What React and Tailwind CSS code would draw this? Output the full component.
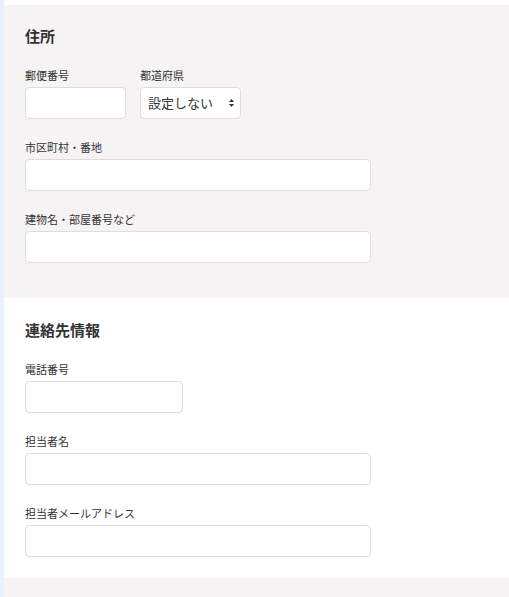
const Field = ({ label, width }) => (
  <div className="mt-[19px]">
    <label className="block text-[11px] leading-[18px] text-[#333] mb-[3px]">{label}</label>
    <input
      type="text"
      className={`${width} h-[32px] bg-white border border-[#e0ddd6] rounded-[4px] outline-none px-2`}
    />
  </div>
)

const App = () => {
  return (
    <div
      className="flex min-h-[597px] bg-white"
      style={{ fontFamily: '"Noto Sans CJK JP", "Noto Sans", sans-serif' }}
    >
      <div className="w-[4px] shrink-0 bg-[#eaf1fc]" />
      <div className="flex-1 pt-[5px] bg-white">
        <section className="bg-[#f5f3f4] pl-[21px] pt-[20px] pb-[35px]">
          <h2 className="text-[15px] leading-[22px] font-bold text-[#333]">住所</h2>
          <div className="flex gap-[14px] mt-[19px]">
            <div>
              <label className="block text-[11px] leading-[18px] text-[#333] mb-[3px]">郵便番号</label>
              <input
                type="text"
                className="w-[101px] h-[32px] bg-white border border-[#e0ddd6] rounded-[4px] outline-none px-2"
              />
            </div>
            <div>
              <label className="block text-[11px] leading-[18px] text-[#333] mb-[3px]">都道府県</label>
              <div className="relative w-[101px] h-[32px]">
                <select className="appearance-none w-full h-full bg-white border border-[#e0ddd6] rounded-[4px] pl-[7px] pr-5 text-[13px] text-[#333] outline-none">
                  <option>設定しない</option>
                </select>
                <svg
                  className="absolute right-[7px] top-[12px] w-[5px] h-[8px] pointer-events-none"
                  viewBox="0 0 5 8"
                  fill="#333"
                >
                  <path d="M2.5 0L5 3H0z" />
                  <path d="M2.5 8L0 5h5z" />
                </svg>
              </div>
            </div>
          </div>
          <Field label="市区町村・番地" width="w-[346px]" />
          <Field label="建物名・部屋番号など" width="w-[346px]" />
        </section>
        <section className="bg-white pl-[21px] pt-[21px] pb-[21px]">
          <h2 className="text-[15px] leading-[22px] font-bold text-[#333]">連絡先情報</h2>
          <Field label="電話番号" width="w-[158px]" />
          <Field label="担当者名" width="w-[346px]" />
          <Field label="担当者メールアドレス" width="w-[346px]" />
        </section>
        <div className="bg-[#f5f3f4] h-[19px]" />
      </div>
    </div>
  )
}

export default App
